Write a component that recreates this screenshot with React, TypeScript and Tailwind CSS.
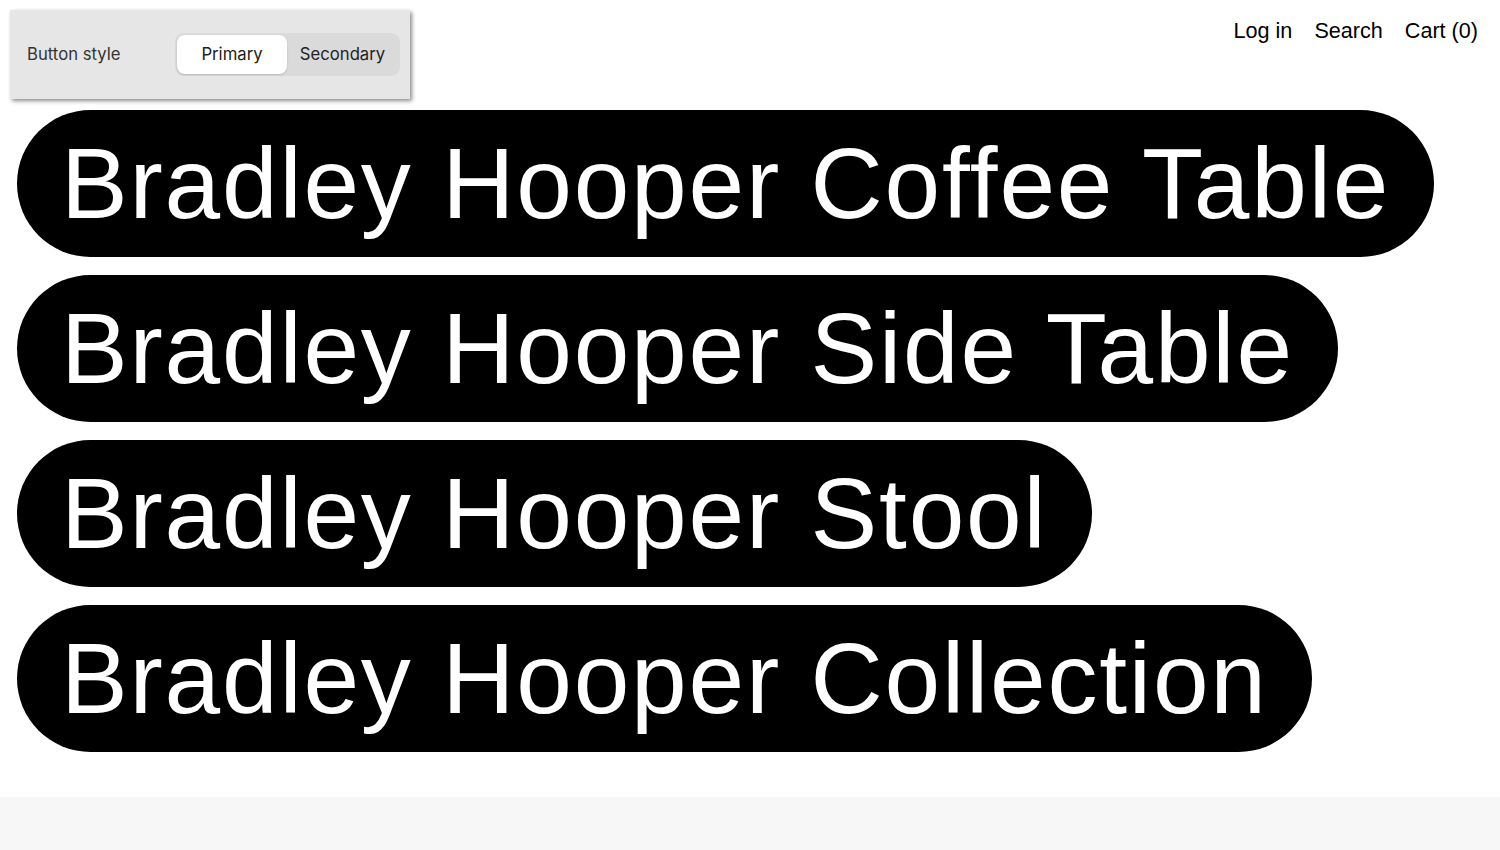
import { useState } from "react";

const products = [
  "Bradley Hooper Coffee Table",
  "Bradley Hooper Side Table",
  "Bradley Hooper Stool",
  "Bradley Hooper Collection",
];

export default function App() {
  const [style, setStyle] = useState<"primary" | "secondary">("primary");

  return (
    <div className="relative min-h-screen bg-white font-['Liberation_Sans',Arial,sans-serif] text-black">
      {/* floating style switcher */}
      <div className="absolute left-[10px] top-[10px] z-10 flex h-[89px] w-[400px] items-center bg-[#e6e6e6] pl-[17px] pr-[10px] shadow-[2px_2px_4px_rgba(0,0,0,0.45)] font-['Inter',sans-serif]">
        <span className="w-[148px] pt-[1px] text-[16.7px] text-[#333]">Button style</span>
        <div className="flex h-[43px] flex-1 items-center rounded-[9px] bg-[#dadada] p-[2px]">
          <button
            onClick={() => setStyle("primary")}
            className={
              style === "primary"
                ? "h-full w-[110px] rounded-[8px] bg-white pt-[1px] text-[16.7px] text-[#222] shadow-[0_1px_2px_rgba(0,0,0,0.15)]"
                : "h-full w-[110px] rounded-[8px] pt-[1px] text-[16.7px] text-[#222]"
            }
          >
            Primary
          </button>
          <button
            onClick={() => setStyle("secondary")}
            className={
              style === "secondary"
                ? "h-full flex-1 rounded-[8px] bg-white pt-[1px] text-[16.7px] text-[#222] shadow-[0_1px_2px_rgba(0,0,0,0.15)]"
                : "h-full flex-1 rounded-[8px] pt-[1px] text-[16.7px] text-[#222]"
            }
          >
            Secondary
          </button>
        </div>
      </div>

      <header className="flex h-[110px] items-start justify-end gap-[22px] pr-[22px] pt-[15px] text-[21.6px]">
        <a href="#">Log in</a>
        <a href="#">Search</a>
        <a href="#">Cart (0)</a>
      </header>

      <main className="flex flex-col items-start gap-[18px] px-[17px] pb-[45px]">
        {products.map((name) => (
          <button
            key={name}
            className={
              style === "primary"
                ? "rounded-full bg-black pl-[44px] pr-[44px] py-[16px] text-[100px] leading-[115px] tracking-[1.8px] text-white"
                : "rounded-full border-[3px] border-black bg-white pl-[41px] pr-[41px] py-[13px] text-[100px] leading-[115px] tracking-[1.8px] text-black"
            }
          >
            {name}
          </button>
        ))}
      </main>

      <footer className="h-[200px] bg-[#f7f7f7]" />
    </div>
  );
}
